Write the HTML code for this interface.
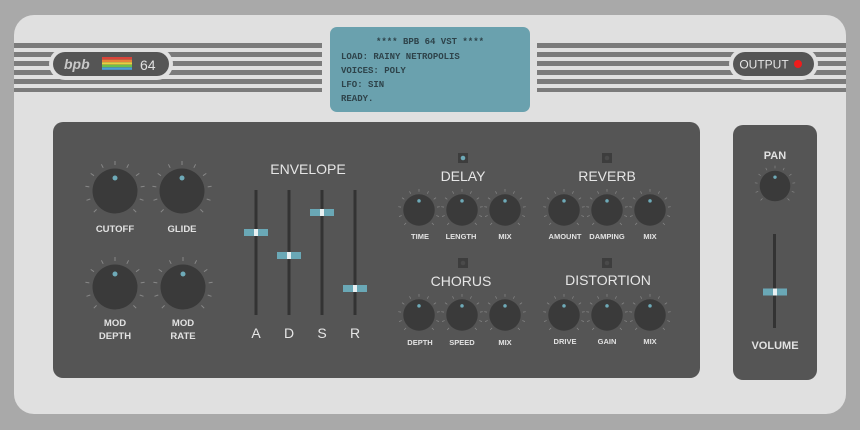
<!DOCTYPE html>
<html><head><meta charset="utf-8"><style>
html,body{margin:0;padding:0;background:#a9a9a9;}
svg{display:block}
.l{font-family:"Liberation Sans",sans-serif;font-weight:bold;fill:#e2e2e2;text-anchor:middle}
.h{font-family:"Liberation Sans",sans-serif;fill:#e6e6e6;text-anchor:middle}
.m{font-family:"Liberation Mono",monospace;font-weight:bold;fill:#2e434a;font-size:9px}
</style></head><body>
<svg width="860" height="430" viewBox="0 0 860 430" xmlns="http://www.w3.org/2000/svg">
<defs>
<g id="k">
<path d="M-18.4,18.4L-21.2,21.2M-24.7,8L-28.5,9.3M-25.7,-4.1L-29.6,-4.7M-21,-15.3L-24.3,-17.6M-11.8,-23.2L-13.6,-26.7M0,-26L0,-30M11.8,-23.2L13.6,-26.7M21,-15.3L24.3,-17.6M25.7,-4.1L29.6,-4.7M24.7,8L28.5,9.3M18.4,18.4L21.2,21.2" stroke="#888" stroke-width="1"/>
<circle r="22.5" fill="#3a3a3a"/>
<circle cx="0" cy="-13" r="2.5" fill="#6eaab8"/>
</g>
<g id="hd"><rect x="-12" y="-3.5" width="24" height="7" fill="#6aa8b6"/><rect x="-2" y="-3.5" width="4" height="7" fill="#e8f0f2"/></g>
</defs>
<rect width="860" height="430" fill="#a9a9a9"/>
<rect x="14" y="15" width="832" height="399" rx="20" fill="#e0e0e0"/>
<g fill="#7b7b7b">
<rect x="14" y="43" width="308" height="5"/><rect x="14" y="52" width="308" height="5"/><rect x="14" y="61" width="308" height="5"/><rect x="14" y="70" width="308" height="5"/><rect x="14" y="79" width="308" height="5"/><rect x="14" y="88" width="308" height="4"/>
<rect x="537" y="43" width="309" height="5"/><rect x="537" y="52" width="309" height="5"/><rect x="537" y="61" width="309" height="5"/><rect x="537" y="70" width="309" height="5"/><rect x="537" y="79" width="309" height="5"/><rect x="537" y="88" width="309" height="4"/>
</g>
<rect x="49" y="48" width="124" height="32" rx="16" fill="#e0e0e0"/>
<rect x="53" y="52" width="116" height="24" rx="12" fill="#555"/>
<text x="64" y="69" style="font-family:'Liberation Sans',sans-serif;font-weight:bold;font-style:italic;font-size:14px;fill:#c8c8c8">bpb</text>
<rect x="102" y="57" width="30" height="2.4" fill="#d9443b"/><rect x="102" y="59.6" width="30" height="2.4" fill="#e8823a"/><rect x="102" y="62.2" width="30" height="2.4" fill="#e8d040"/><rect x="102" y="64.8" width="30" height="2.4" fill="#6cc04a"/><rect x="102" y="67.4" width="30" height="2.4" fill="#4aa0d8"/>
<text x="140" y="70" style="font-family:'Liberation Sans',sans-serif;font-size:14px;fill:#e0e0e0">64</text>
<rect x="729" y="48" width="89" height="32" rx="16" fill="#e0e0e0"/>
<rect x="733" y="52" width="81" height="24" rx="12" fill="#555"/>
<text x="764" y="68.5" class="h" style="font-size:12px">OUTPUT</text>
<circle cx="798" cy="64" r="4" fill="#ee1c1c"/>
<rect x="330" y="27" width="200" height="85" rx="7" fill="#6aa1ae"/>
<text x="430" y="44" class="m" text-anchor="middle">**** BPB 64 VST ****</text>
<text x="341" y="59" class="m">LOAD: RAINY NETROPOLIS</text>
<text x="341" y="73" class="m">VOICES: POLY</text>
<text x="341" y="87" class="m">LFO: SIN</text>
<text x="341" y="101" class="m">READY.</text>
<rect x="53" y="122" width="647" height="256" rx="10" fill="#555"/>
<rect x="733" y="125" width="84" height="255" rx="10" fill="#555"/>
<use href="#k" x="115" y="191"/><use href="#k" x="182" y="191"/>
<use href="#k" x="115" y="287"/><use href="#k" x="183" y="287"/>
<text x="115" y="232" class="l" style="font-size:9.5px">CUTOFF</text>
<text x="182" y="232" class="l" style="font-size:9.5px">GLIDE</text>
<text x="115" y="326" class="l" style="font-size:9.5px">MOD</text><text x="115" y="339" class="l" style="font-size:9.5px">DEPTH</text>
<text x="183" y="326" class="l" style="font-size:9.5px">MOD</text><text x="183" y="339" class="l" style="font-size:9.5px">RATE</text>
<text x="308" y="174" class="h" style="font-size:14px">ENVELOPE</text>
<g fill="#333"><rect x="254.5" y="190" width="3" height="125"/><rect x="287.5" y="190" width="3" height="125"/><rect x="320.5" y="190" width="3" height="125"/><rect x="353.5" y="190" width="3" height="125"/></g>
<use href="#hd" x="256" y="232.5"/><use href="#hd" x="289" y="255.5"/><use href="#hd" x="322" y="212.5"/><use href="#hd" x="355" y="288.5"/>
<g class="h" style="font-size:14px"><text x="256" y="338">A</text><text x="289" y="338">D</text><text x="322" y="338">S</text><text x="355" y="338">R</text></g>
<rect x="458" y="153" width="10" height="10" fill="#3d3d3d"/><circle cx="463" cy="158" r="2.3" fill="#6eaab8"/>
<rect x="602" y="153" width="10" height="10" fill="#3d3d3d"/><circle cx="607" cy="158" r="2.3" fill="#4a4a4a"/>
<rect x="458" y="258" width="10" height="10" fill="#3d3d3d"/><circle cx="463" cy="263" r="2.3" fill="#4a4a4a"/>
<rect x="602" y="258" width="10" height="10" fill="#3d3d3d"/><circle cx="607" cy="263" r="2.3" fill="#4a4a4a"/>
<g class="h" style="font-size:14px"><text x="463" y="181">DELAY</text><text x="607" y="181">REVERB</text><text x="461" y="286">CHORUS</text><text x="608" y="285">DISTORTION</text></g>
<g transform="translate(419,210) scale(0.7)"><use href="#k"/></g>
<g transform="translate(462,210) scale(0.7)"><use href="#k"/></g>
<g transform="translate(505,210) scale(0.7)"><use href="#k"/></g>
<g transform="translate(564,210) scale(0.7)"><use href="#k"/></g>
<g transform="translate(607,210) scale(0.7)"><use href="#k"/></g>
<g transform="translate(650,210) scale(0.7)"><use href="#k"/></g>
<g transform="translate(419,315) scale(0.7)"><use href="#k"/></g>
<g transform="translate(462,315) scale(0.7)"><use href="#k"/></g>
<g transform="translate(505,315) scale(0.7)"><use href="#k"/></g>
<g transform="translate(564,315) scale(0.7)"><use href="#k"/></g>
<g transform="translate(607,315) scale(0.7)"><use href="#k"/></g>
<g transform="translate(650,315) scale(0.7)"><use href="#k"/></g>
<g class="l" style="font-size:7.5px">
<text x="420" y="239">TIME</text><text x="461" y="239">LENGTH</text><text x="505" y="239">MIX</text>
<text x="565" y="239">AMOUNT</text><text x="607" y="239">DAMPING</text><text x="650" y="239">MIX</text>
<text x="420" y="345">DEPTH</text><text x="462" y="345">SPEED</text><text x="505" y="345">MIX</text>
<text x="565" y="344">DRIVE</text><text x="607" y="344">GAIN</text><text x="650" y="344">MIX</text>
</g>
<text x="775" y="159" class="l" style="font-size:11px">PAN</text>
<g transform="translate(775,186) scale(0.68)"><use href="#k"/></g>
<rect x="773" y="234" width="3" height="94" fill="#333"/>
<use href="#hd" x="775" y="292"/>
<text x="775" y="349" class="l" style="font-size:11px">VOLUME</text>
</svg>
</body></html>
